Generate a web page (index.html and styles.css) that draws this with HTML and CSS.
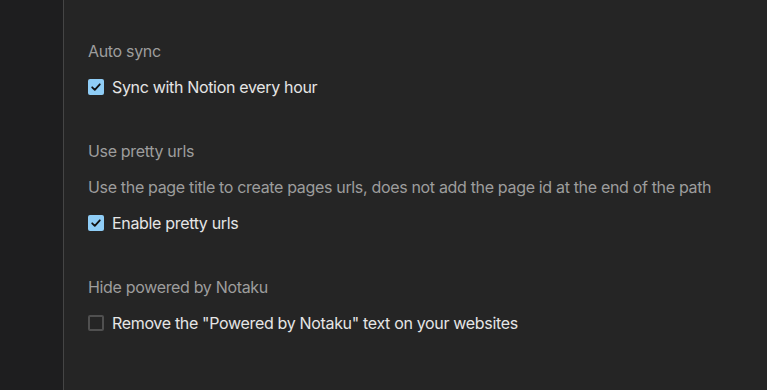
FILE: index.html
```html
<!DOCTYPE html>
<html lang="en">
<head>
    <meta charset="UTF-8">
    <meta name="viewport" content="width=device-width, initial-scale=1.0">
    <title>Site settings</title>
    <link rel="stylesheet" href="styles.css">
</head>
<body>
    <div class="layout">
        <aside class="sidebar"></aside>
        <main class="settings">
            <section class="setting">
                <div class="setting-title">Auto sync</div>
                <label class="check-row">
                    <span class="box checked">
                        <svg viewBox="0 0 16 16" width="16" height="16"><path d="M4.2 8.3l2.6 2.6 5-5.6" fill="none" stroke="#111" stroke-width="1.8" stroke-linecap="round" stroke-linejoin="round"/></svg>
                    </span>
                    Sync with Notion every hour
                </label>
            </section>

            <section class="setting">
                <div class="setting-title">Use pretty urls</div>
                <div class="setting-desc">Use the page title to create pages urls, does not add the page id at the end of the path</div>
                <label class="check-row">
                    <span class="box checked">
                        <svg viewBox="0 0 16 16" width="16" height="16"><path d="M4.2 8.3l2.6 2.6 5-5.6" fill="none" stroke="#111" stroke-width="1.8" stroke-linecap="round" stroke-linejoin="round"/></svg>
                    </span>
                    Enable pretty urls
                </label>
            </section>

            <section class="setting">
                <div class="setting-title">Hide powered by Notaku</div>
                <label class="check-row">
                    <span class="box"></span>
                    Remove the "Powered by Notaku" text on your websites
                </label>
            </section>
        </main>
    </div>
</body>
</html>
```

FILE: styles.css
```css
/* Basic reset */
body, html {
    margin: 0;
    padding: 0;
    height: 100%;
    overflow: hidden;
    font-family: Inter, "Noto Sans", sans-serif;
    background-color: #252525;
}

.layout {
    display: flex;
    height: 100%;
}

/* Left rail */
.sidebar {
    width: 63px;
    flex-shrink: 0;
    background-color: #1e1e1f;
    border-right: 1px solid #454545;
}

/* Settings column */
.settings {
    flex: 1;
    padding: 39px 24px 0 24px;
    display: flex;
    flex-direction: column;
    gap: 40px;
}

.setting {
    display: flex;
    flex-direction: column;
    gap: 12px;
}

.setting-title,
.setting-desc {
    font-size: 16px;
    line-height: 24px;
    letter-spacing: -0.33px;
    color: #9d9d9d;
}

.check-row {
    display: flex;
    align-items: center;
    gap: 8px;
    font-size: 16px;
    line-height: 24px;
    letter-spacing: -0.33px;
    color: #e6e6e6;
    cursor: pointer;
}

.box {
    width: 16px;
    height: 16px;
    box-sizing: border-box;
    border: 2px solid #505050;
    border-radius: 2px;
    display: flex;
}

.box.checked {
    border: none;
    background-color: #8fcdf6;
}
```
